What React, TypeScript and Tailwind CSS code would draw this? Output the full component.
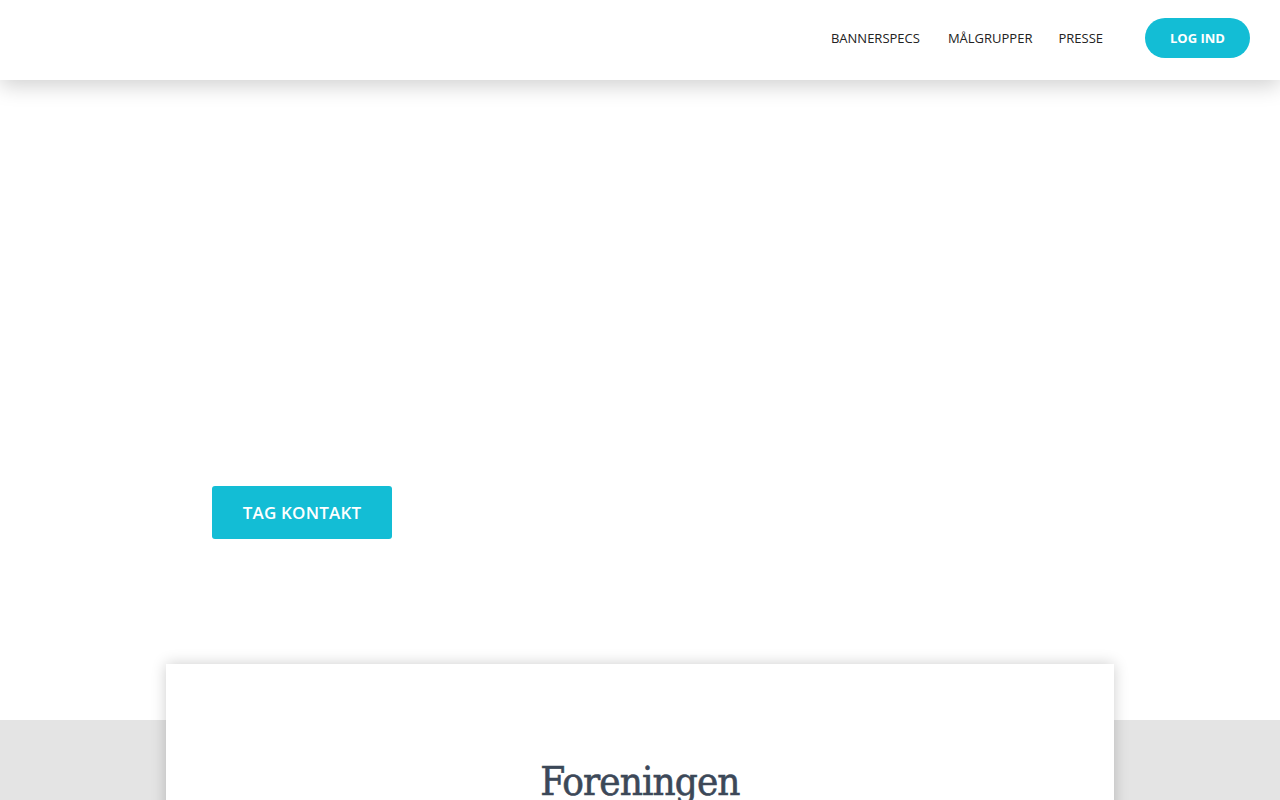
import React from "react";

const NavBar = () => {
  return (
    <div className="relative z-10 w-full h-[80px] bg-white flex justify-end items-center pr-[30px] pb-[4px] shadow-[0_6px_20px_rgba(0,0,0,0.18)]">
      <nav className="flex items-center pt-[2px] text-[13px] text-[#222] font-['Open_Sans',sans-serif]">
        <a className="px-[14px]">BANNERSPECS</a>
        <a className="pl-[14px] pr-[13px]">MÅLGRUPPER</a>
        <a className="px-[13px]">PRESSE</a>
      </nav>
      <button className="ml-[29px] h-[40px] w-[105px] pt-[2px] rounded-full bg-[#13bdd5] text-white text-[13px] font-bold font-['Open_Sans',sans-serif]">
        LOG IND
      </button>
    </div>
  );
};

export default function App() {
  return (
    <div className="h-[800px] bg-white overflow-hidden">
      <NavBar />
      <section className="h-[640px] bg-white pl-[212px] pt-[406px]">
        <button className="h-[53px] w-[180px] rounded-[3px] bg-[#13bdd5] text-white text-[17px] font-semibold tracking-[0.2px] font-['Open_Sans',sans-serif]">
          TAG KONTAKT
        </button>
      </section>
      <section className="bg-[#e4e4e4] h-[400px] flex flex-col">
        <div className="mx-auto w-[948px] -mt-[56px] bg-white h-[400px] shadow-[0_0_14px_rgba(0,0,0,0.2)] pt-[93px] flex justify-center">
          <h2 className="text-[40px] leading-[48px] font-normal tracking-[-0.9px] text-[#3c4858] [-webkit-text-stroke:0.6px_#3c4858] font-['DejaVu_Serif_Condensed','DejaVu_Serif',serif]">
            Foreningen
          </h2>
        </div>
      </section>
    </div>
  );
}
